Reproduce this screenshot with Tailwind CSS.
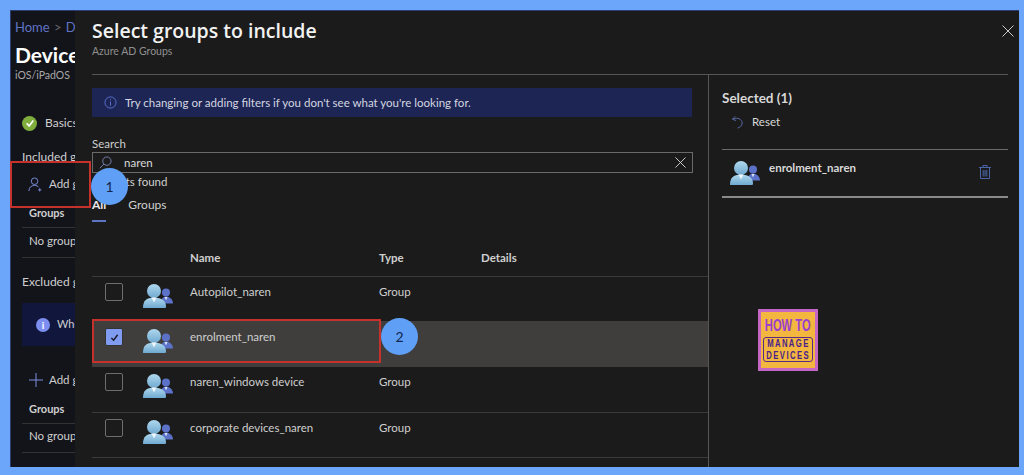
<!DOCTYPE html>
<html lang="en">
<head>
    <meta charset="UTF-8">
    <title>Select groups to include</title>
    <script src="https://cdn.jsdelivr.net/npm/@tailwindcss/browser@4"></script>
</head>
<body class="bg-[#6ca6fb] w-[1024px] h-[475px] overflow-hidden font-['Lato',sans-serif]">
    <svg class="absolute h-0 w-0">
        <defs>
            <linearGradient id="bigUser" x1="0" y1="0" x2="0" y2="1">
                <stop offset="0" stop-color="#b0d8ee"/>
                <stop offset="1" stop-color="#6fa9d0"/>
            </linearGradient>
            <symbol id="group" viewBox="0 0 31 26">
                <circle cx="23" cy="9.500" r="4" fill="#5c72c9"/>
                <path d="M18 20.500c0-4 1.500-7 5-7s7 3 7 7z" fill="#5c72c9"/>
                <path d="M21.500 14h3l-1.500 3.500z" fill="#d8e4f4"/>
                <circle cx="11" cy="8" r="7" fill="url(#bigUser)"/>
                <path d="M0 25c0-7 3-10.500 11-10.500S23 18 23 23.500c0 1-.5 1.500-1.500 1.500z" fill="url(#bigUser)"/>
                <path d="M8.500 14.500h5l-2.500 5z" fill="#eef5fb"/>
            </symbol>
        </defs>
    </svg>

    <div class="relative h-[475px] pt-[10px] pl-[10px] pr-[5px] pb-[8px]">
        <div class="flex h-[457px] border-t border-l border-[#2f3c72] bg-[#1b1b1b]">
            <!-- blade behind the dialog -->
            <aside class="w-[64px] shrink-0 overflow-hidden bg-[#13131a] pl-[4px] whitespace-nowrap text-[#cfcfcf]">
                <div class="h-[31px] pt-[7px] text-[13px] leading-[18px] text-[#5f74c4]">Home <span class="mx-[1px] text-[#6a6a6a]">&gt;</span> D</div>
                <div class="text-[21px] leading-[26px] font-bold text-white">Devices</div>
                <div class="text-[10.500px] leading-[15px] text-[#a8a8a8]">iOS/iPadOS</div>
                <div class="mt-[29px] flex items-center gap-[8px] pl-[7px] h-[22px]">
                    <span class="flex h-[15px] w-[15px] shrink-0 items-center justify-center rounded-full bg-[#7fae3c]">
                        <svg viewBox="0 0 12 12" class="h-[10px] w-[10px]" fill="none" stroke="#fff" stroke-width="2"><path d="M2 6.500 5 9.500 10 3"/></svg>
                    </span>
                    <span class="text-[12px]">Basics</span>
                </div>
                <div class="mt-[14px] pl-[7px] text-[12px] leading-[18px]">Included groups</div>
                <div class="mt-[9px] flex items-center gap-[6px] pl-[13px] h-[18px] text-[11.500px]">
                    <svg viewBox="0 0 16 16" class="h-[15px] w-[15px] shrink-0" fill="none" stroke="#7c8fdc" stroke-width="1"><circle cx="7" cy="4.500" r="3.500"/><path d="M1 15c0-4 2.500-6 6-6 2 0 3.500.6 4.500 2"/><path d="M12.500 12v3.500M10.800 13.700h3.500"/></svg>
                    <span>Add groups</span>
                </div>
                <div class="mt-[12px] pl-[14px] text-[11px] leading-[16px] font-bold">Groups</div>
                <div class="mt-[6px] ml-[7px] border-y border-[#333] pt-[5px] pl-[7px] pb-[8px] text-[11.500px] leading-[16px]">No groups</div>
                <div class="mt-[15px] pl-[7px] text-[12px] leading-[18px]">Excluded groups</div>
                <div class="mt-[12px] ml-[7px] flex h-[43px] items-center gap-[7px] bg-[#10163c] pl-[14px] text-[11px]">
                    <span class="flex h-[14px] w-[14px] shrink-0 items-center justify-center rounded-full bg-[#7c8ff0] text-[10px] leading-none font-bold text-white">i</span>
                    <span>When excluding</span>
                </div>
                <div class="mt-[25px] flex items-center gap-[6px] pl-[14px] h-[18px] text-[11.500px]">
                    <svg viewBox="0 0 14 14" class="h-[14px] w-[14px] shrink-0" stroke="#7c8fdc" stroke-width="1"><path d="M7 0v14M0 7h14"/></svg>
                    <span>Add groups</span>
                </div>
                <div class="mt-[12px] pl-[14px] text-[11px] leading-[16px] font-bold">Groups</div>
                <div class="mt-[6px] ml-[7px] border-y border-[#333] pt-[4px] pl-[7px] pb-[8px] text-[11.500px] leading-[16px]">No groups</div>
            </aside>

            <!-- dialog -->
            <main class="relative flex min-w-0 flex-1 flex-col pl-[17px] pr-[11px]">
                <header class="h-[64px] shrink-0 border-b border-[#565654]">
                    <h1 class="pt-[6px] font-['Open_Sans',sans-serif] text-[19.500px] leading-[27px] font-semibold text-[#f2f2f2]">Select groups to include</h1>
                    <p class="text-[10.500px] leading-[15px] text-[#8f8f8f]">Azure AD Groups</p>
                    <button class="absolute top-[14px] right-[5px] h-[12px] w-[12px]">
                        <svg viewBox="0 0 12 12" class="h-[12px] w-[12px]" stroke="#c9c9c9" stroke-width="1"><path d="M.5.500l11 11M11.500.500l-11 11"/></svg>
                    </button>
                </header>

                <div class="flex min-h-0 flex-1">
                    <!-- results -->
                    <section class="w-[617px] shrink-0 border-r border-[#565654] text-[#cfcfcf]">
                        <div class="mt-[13px] mr-[16px] flex h-[29px] items-center gap-[8px] bg-[#1d2555] pl-[12px] text-[11.500px] text-[#d4d6e0]">
                            <svg viewBox="0 0 14 14" class="h-[13px] w-[13px] shrink-0" fill="none" stroke="#5d74d4" stroke-width="1"><circle cx="7" cy="7" r="6"/><path d="M7 6v4.500M7 3.500v1.200"/></svg>
                            <span>Try changing or adding filters if you don't see what you're looking for.</span>
                        </div>
                        <div class="mt-[19px] text-[11.500px] leading-[16px]">Search</div>
                        <div class="mr-[15px] flex h-[21px] items-center border border-[#6a6a68] pr-[6px] pl-[6px]">
                            <svg viewBox="0 0 14 14" class="h-[13px] w-[13px] shrink-0" fill="none" stroke="#7a86b8" stroke-width="1"><circle cx="8.500" cy="5.500" r="4.500"/><path d="M5.200 8.800.8 13.200"/></svg>
                            <span class="ml-[12px] flex-1 text-[11.500px] font-medium">naren</span>
                            <svg viewBox="0 0 12 12" class="h-[11px] w-[11px]" stroke="#d8d8d8" stroke-width="1"><path d="M.5.500l11 11M11.500.500l-11 11"/></svg>
                        </div>
                        <div class="mt-[1px] text-[11.500px] leading-[16px]">4 results found</div>
                        <div class="mt-[6px] flex gap-[22px] text-[12px] leading-[18px]">
                            <span class="border-b-2 border-[#5d74c4] pb-[6px] font-bold text-[#e8e8e8]">All</span>
                            <span>Groups</span>
                        </div>

                        <table class="mt-[27px] w-full table-fixed border-collapse text-left text-[11.500px]">
                            <colgroup>
                                <col class="w-[98px]">
                                <col class="w-[189px]">
                                <col class="w-[102px]">
                                <col>
                            </colgroup>
                            <thead>
                                <tr class="h-[27px] border-b border-[#3a3a38] align-top">
                                    <th></th>
                                    <th class="font-bold">Name</th>
                                    <th class="font-bold">Type</th>
                                    <th class="font-bold">Details</th>
                                </tr>
                            </thead>
                            <tbody>
                                <tr class="h-[45px] align-top">
                                    <td class="pt-[6px] pl-[13px]">
                                        <div class="flex gap-[20px]">
                                            <span class="block h-[18px] w-[18px] rounded-[2px] border border-[#6d6d6b]"></span>
                                            <svg class="h-[26px] w-[31px]"><use href="#group"/></svg>
                                        </div>
                                    </td>
                                    <td class="pt-[6px]">Autopilot_naren</td>
                                    <td class="pt-[6px]">Group</td>
                                    <td></td>
                                </tr>
                                <tr class="h-[46px] bg-[#3f3e3c] align-top">
                                    <td class="pt-[7px] pl-[13px]">
                                        <div class="flex gap-[20px]">
                                            <span class="flex h-[18px] w-[18px] items-center justify-center rounded-[2px] border border-[#333] bg-[#7f9cf0]">
                                                <svg viewBox="0 0 10 10" class="h-[9px] w-[9px]" fill="none" stroke="#1a1a2a" stroke-width="1.600"><path d="M1.500 5.500 4 8l4.500-6"/></svg>
                                            </span>
                                            <svg class="h-[26px] w-[31px]"><use href="#group"/></svg>
                                        </div>
                                    </td>
                                    <td class="pt-[7px]">enrolment_naren</td>
                                    <td></td>
                                    <td></td>
                                </tr>
                                <tr class="h-[45px] border-b border-[#3a3a38] align-top">
                                    <td class="pt-[6px] pl-[13px]">
                                        <div class="flex gap-[20px]">
                                            <span class="block h-[18px] w-[18px] rounded-[2px] border border-[#6d6d6b]"></span>
                                            <svg class="h-[26px] w-[31px]"><use href="#group"/></svg>
                                        </div>
                                    </td>
                                    <td class="pt-[6px]">naren_windows device</td>
                                    <td class="pt-[6px]">Group</td>
                                    <td></td>
                                </tr>
                                <tr class="h-[45px] border-b border-[#3a3a38] align-top">
                                    <td class="pt-[6px] pl-[13px]">
                                        <div class="flex gap-[20px]">
                                            <span class="block h-[18px] w-[18px] rounded-[2px] border border-[#6d6d6b]"></span>
                                            <svg class="h-[26px] w-[31px]"><use href="#group"/></svg>
                                        </div>
                                    </td>
                                    <td class="pt-[6px]">corporate devices_naren</td>
                                    <td class="pt-[6px]">Group</td>
                                    <td></td>
                                </tr>
                            </tbody>
                        </table>
                    </section>

                    <!-- selected list -->
                    <section class="flex-1 pl-[13px] text-[#d8d8d8]">
                        <div class="mt-[14px] text-[13.500px] leading-[18px] font-bold">Selected (1)</div>
                        <div class="mt-[7px] flex items-center gap-[8px] pl-[9px] text-[11.500px] leading-[16px]">
                            <svg viewBox="0 0 14 14" class="h-[14px] w-[13px]" fill="none" stroke="#5d6fb0" stroke-width="1"><path d="M4.500 1 1.500 4l4 1.500M2 4c5-2.500 10 0 10 4 0 3-2.500 5-5 5.500"/></svg>
                            <span>Reset</span>
                        </div>
                        <div class="mt-[19px] flex h-[49px] border-t border-b-2 border-t-[#6a6a68] border-b-[#8a8a88] pt-[10px] pl-[8px]">
                            <svg class="h-[26px] w-[31px] shrink-0"><use href="#group"/></svg>
                            <span class="ml-[8px] flex-1 text-[11.500px] leading-[16px] font-bold">enrolment_naren</span>
                            <svg viewBox="0 0 12 14" class="mt-[5px] mr-[17px] h-[14px] w-[12px]" fill="none" stroke="#4a66a8" stroke-width="1"><path d="M0 2.500h12M4 2.500V.5h4v2M1.500 2.500v11h9v-11M4.200 5v6.500M6 5v6.500M7.800 5v6.500"/></svg>
                        </div>
                        <!-- watermark -->
                        <div class="mt-[111px] ml-[36px] flex h-[62px] w-[60px] flex-col items-center border-[3px] border-[#c566c4] bg-[#f3b63f] pt-[5px]">
                            <div class="scale-x-[.7] text-[16px] leading-[17px] font-bold whitespace-nowrap text-[#9a3fd0] font-['Liberation_Sans',sans-serif]">HOW TO</div>
                            <div class="mt-[3px] flex w-[50px] flex-col items-center overflow-hidden rounded-[3px] border border-[#5b2a86] text-[11px] leading-[11.500px] font-bold tracking-[2px] text-[#4a1f8a] font-['Liberation_Sans',sans-serif]">
                                <span class="scale-x-[.7] whitespace-nowrap">MANAGE</span>
                                <span class="scale-x-[.7] whitespace-nowrap">DEVICES</span>
                            </div>
                        </div>
                    </section>
                </div>
            </main>
        </div>

        <!-- callouts drawn over the screenshot -->
        <div class="absolute top-[161px] left-[10px] h-[47px] w-[81px] border-[2px] border-[#c4322b]"></div>
        <div class="absolute top-[319px] left-[92px] h-[44px] w-[289px] border-[2px] border-[#c4322b]"></div>
        <div class="absolute top-[168px] left-[91px] flex h-[37px] w-[37px] items-center justify-center rounded-full bg-[#5f9ff5] text-[14px] text-[#14264f]">1</div>
        <div class="absolute top-[318px] left-[381px] flex h-[37px] w-[37px] items-center justify-center rounded-full bg-[#5f9ff5] text-[14px] text-[#14264f]">2</div>
    </div>
</body>
</html>
